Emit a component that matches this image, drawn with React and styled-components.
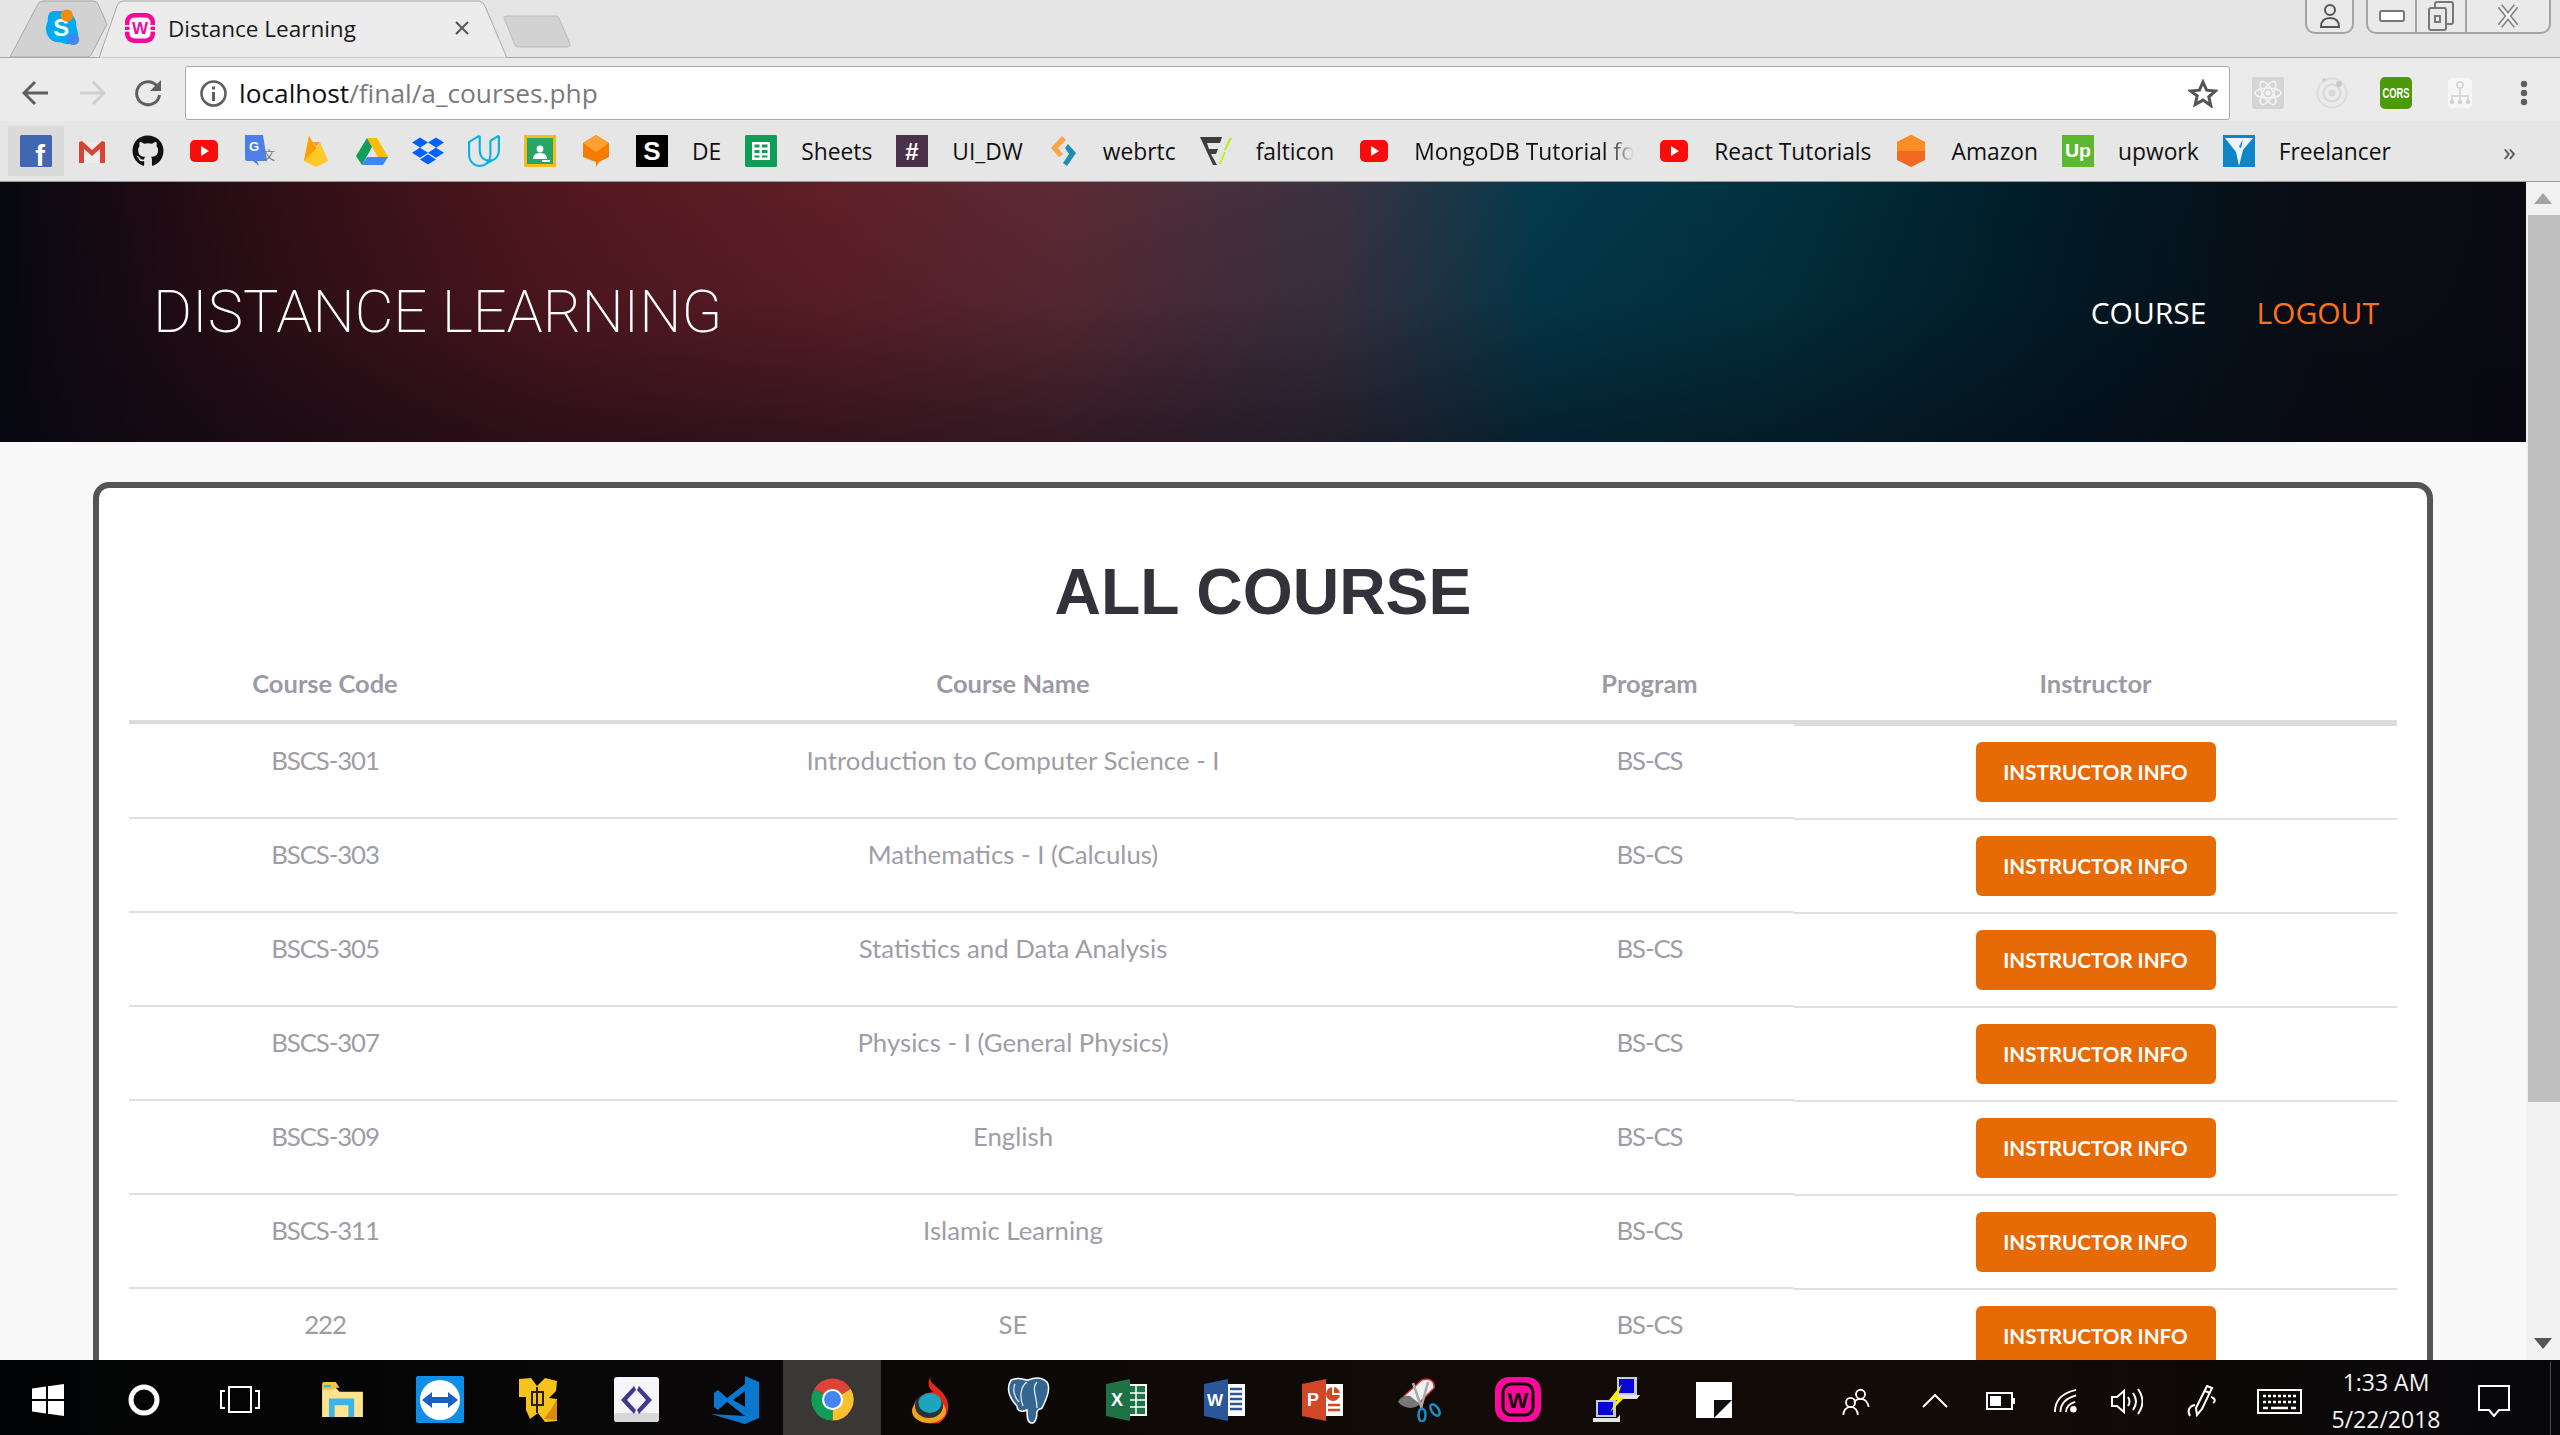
import React from 'react'
import styled, { createGlobalStyle } from 'styled-components'
import { FaGithub, FaDropbox } from 'react-icons/fa'
import { SiUdacity } from 'react-icons/si'

const GlobalStyle = createGlobalStyle`
    html, body {
        margin: 0;
        padding: 0;
        height: 100%;
        overflow: hidden;
    }
    * {
        box-sizing: border-box;
    }
`

const Page = styled.div`
    display: flex;
    flex-direction: column;
    height: 100vh;
    font-family: 'Open Sans', sans-serif;
    background: #f8f8f8;
`

/* browser chrome */
const TabStrip = styled.div`
    display: flex;
    align-items: flex-start;
    flex: none;
    height: 58px;
    padding-left: 10px;
    background: #e5e5e5;
    border-bottom: 1px solid #a8a8a8;
`

const TabShape = styled.svg`
    position: absolute;
    left: 0;
    top: 0;
`

const SideTab = styled.div`
    position: relative;
    flex: none;
    display: flex;
    align-items: center;
    justify-content: center;
    width: 96px;
    height: 58px;
    padding: 0 0 3px 10px;
`

const ActiveTab = styled.div`
    position: relative;
    flex: none;
    display: flex;
    align-items: center;
    width: 408px;
    height: 58px;
    margin-left: -7px;
    padding: 0 0 2px 26px;
`

const TabIcon = styled.span`
    position: relative;
    display: flex;
`

const TabTitle = styled.span`
    position: relative;
    margin-left: 13px;
    font-size: 22.500px;
    color: #1a1a1a;
    width: 287px;
`

const TabClose = styled.svg`
    position: relative;
`

const NewTab = styled.svg`
    flex: none;
    margin: 15px 0 0 -4px;
`

const WindowControls = styled.div`
    display: flex;
    align-items: flex-start;
    margin-left: auto;
    padding-right: 9px;
`

const WindowGroup = styled.div`
    display: flex;
    height: 34px;
    margin-left: ${(p) => p.$gap || 0}px;
    border: 2px solid #a4a4a4;
    border-top: 0;
    border-radius: 0 0 10px 10px;
    background: #e9e9e9;
`

const WindowBtn = styled.div`
    display: flex;
    align-items: center;
    justify-content: center;
    width: ${(p) => p.$w}px;
    border-left: ${(p) => (p.$first ? '0' : '2px solid #a4a4a4')};
`

const Toolbar = styled.div`
    display: flex;
    align-items: flex-start;
    flex: none;
    height: 63px;
    padding: 8px 0 0 8px;
    background: #ebebeb;
`

const NavBtn = styled.div`
    display: flex;
    align-items: center;
    justify-content: center;
    width: 56px;
    height: 53px;
`

const UrlBox = styled.div`
    display: flex;
    align-items: center;
    width: 2045px;
    height: 54px;
    margin-left: 9px;
    padding: 0 11px 0 14px;
    background: #fff;
    border: 1px solid #a8a8a8;
    border-radius: 3px;
`

const UrlText = styled.span`
    margin-left: 12px;
    font-size: 26.300px;
    color: #7b7b7b;
    flex: 1;
    b {
        font-weight: 400;
        color: #111;
    }
`

const Extensions = styled.div`
    display: flex;
    margin-left: 6px;
`

const ExtBtn = styled.div`
    display: flex;
    align-items: center;
    justify-content: center;
    width: 64px;
    height: 53px;
`

const BookmarkBar = styled.div`
    display: flex;
    align-items: center;
    flex: none;
    height: 61px;
    padding: 0 0 1px 8px;
    background: #e6e6e6;
    border-bottom: 1px solid #989898;
`

const Bookmark = styled.div`
    display: flex;
    align-items: center;
    gap: 24px;
    height: 50px;
    padding: 0 12px;
    background: ${(p) => (p.$active ? '#dadada' : 'transparent')};
    svg {
        flex: none;
    }
`

const BookmarkLabel = styled.span`
    padding-top: 2px;
    font-size: 22.800px;
    color: #111;
    white-space: nowrap;
    ${(p) => p.$clip && `
        width: ${p.$clip}px;
        overflow: hidden;
        -webkit-mask-image: linear-gradient(to right, #000 88%, transparent);
        mask-image: linear-gradient(to right, #000 88%, transparent);
    `}
`

const MoreBookmarks = styled.span`
    margin-left: auto;
    padding-right: 44px;
    font-size: 26px;
    line-height: 26px;
    color: #555;
`

/* page */
const Viewport = styled.div`
    display: flex;
    flex: 1;
    min-height: 0;
`

const Main = styled.div`
    flex: 1;
    min-width: 0;
    overflow: hidden;
`

const Header = styled.header`
    display: flex;
    align-items: center;
    justify-content: space-between;
    height: 260px;
    padding: 0 147px 0 153px;
    background:
        linear-gradient(to bottom, rgba(8, 8, 18, 0) 0%, rgba(8, 8, 18, 0.1) 45%, rgba(8, 8, 18, 0.5) 100%),
        linear-gradient(to right, #070811 0%, #260c14 8%, #52171e 22%, #601f27 33%, #5c2a35 42%, #3a3242 53%, #033a4c 61%, #02313f 70%, #011a26 82%, #0a0c14 92%, #0b0a12 100%);
`

const Brand = styled.h1`
    margin: 0;
    font-family: Roboto, sans-serif;
    font-size: 59.600px;
    font-weight: 200;
    color: #fff;
    white-space: nowrap;
`

const Nav = styled.nav`
    display: flex;
    gap: 50px;
`

const NavLink = styled.a`
    font-size: 30px;
    font-weight: 400;
    color: ${(p) => (p.$accent ? '#ff7216' : '#fff')};
`

const Card = styled.section`
    margin: 40px 93px 0;
    padding: 72px 30px 0;
    background: #fff;
    border: 6px solid #555;
    border-radius: 16px;
`

const Title = styled.h2`
    margin: 0;
    font-family: 'Liberation Sans', Arial, sans-serif;
    font-size: 64.300px;
    font-weight: 700;
    line-height: 64px;
    text-align: center;
    color: #33323a;
`

const Row = styled.div`
    display: grid;
    grid-template-columns: 392px 984px 289px 603px;
    font-family: Lato, sans-serif;
`

const HeadCell = styled.div`
    height: ${(p) => (p.$last ? 102 : 100)}px;
    padding-top: 44px;
    font-size: 25.500px;
    font-weight: 700;
    line-height: 30px;
    text-align: center;
    color: #9b9aa5;
    border-bottom: ${(p) => (p.$last ? 6 : 4)}px solid #dcdcdc;
`

const Cell = styled.div`
    height: 94px;
    margin: -1px 0 1px;
    padding-top: 20px;
    font-size: 25.800px;
    line-height: 30px;
    letter-spacing: ${(p) => (p.$tight ? '-1.1px' : '0')};
    text-align: center;
    color: #9e9da7;
    border-bottom: 2px solid #dfdfdf;
`

const ActionCell = styled.div`
    display: flex;
    justify-content: center;
    height: 94px;
    padding-top: 16px;
    border-bottom: 2px solid #dfdfdf;
`

const InfoButton = styled.button`
    width: 240px;
    height: 60px;
    padding: 0 0 1px;
    font-family: Lato, sans-serif;
    font-size: 20.600px;
    font-weight: 700;
    text-transform: uppercase;
    color: #fff;
    background: #e66b07;
    border: 0;
    border-radius: 6px;
`

const Scrollbar = styled.div`
    display: flex;
    flex-direction: column;
    flex: none;
    width: 34px;
    background: #f1f1f1;
`

const ScrollArrow = styled.div`
    display: flex;
    align-items: center;
    justify-content: center;
    flex: none;
    height: 33px;
    margin-top: ${(p) => (p.$bottom ? 'auto' : '0')};
`

const ScrollThumb = styled.div`
    height: 887px;
    margin-left: 2px;
    background: #bfbfbf;
`

/* taskbar */
const Taskbar = styled.footer`
    display: flex;
    flex: none;
    height: 75px;
    background: linear-gradient(to right, #020304 0%, #0a0808 30%, #120b07 58%, #110a07 80%, #07070b 100%);
`

const StartItem = styled.div`
    display: flex;
    align-items: center;
    justify-content: center;
    flex: none;
    width: 96px;
    padding-top: 4px;
`

const AppList = styled.div`
    display: flex;
    margin-left: 5px;
`

const AppItem = styled.div`
    display: flex;
    align-items: center;
    justify-content: center;
    flex: none;
    width: 98px;
    padding-top: 4px;
    background: ${(p) => (p.$active ? '#3b3735' : 'transparent')};
`

const Tray = styled.div`
    display: grid;
    grid-template-columns: 80px 78px 52px 80px 42px 108px 46px 168px 48px 42px;
    align-items: center;
    justify-items: center;
    margin-left: auto;
    padding-top: 4px;
`

const Clock = styled.div`
    font-size: 23px;
    line-height: 37px;
    text-align: center;
    color: #f2f2f2;
    white-space: nowrap;
`

const TrayEnd = styled.div`
    justify-self: end;
    width: 1px;
    height: 75px;
    margin: -4px 9px 0 0;
    background: #4a4a4a;
`

/* icons */
const SkypeIcon = () => (
    <svg width="38" height="38" viewBox="0 0 40 40">
        <path d="M10 2h9c10 0 15 7 15 15 0 4 2 6 2 10 0 7-6 10-11 10-4 0-6-2-10-2C7 35 2 28 2 20c0-4 2-5 2-9 0-5 2-9 6-9z" fill="#00a9f0" />
        <text x="18" y="28" textAnchor="middle" fontFamily="Liberation Sans, sans-serif" fontWeight="700" fontSize="25" fill="#fff">S</text>
        <circle cx="24" cy="7" r="6.500" fill="#f58b0a" />
        <circle cx="31" cy="32" r="6" fill="#4285f4" />
    </svg>
)

const WampIcon = () => (
    <svg width="30" height="30" viewBox="0 0 30 30">
        <rect width="30" height="30" rx="9" fill="#f9069b" />
        <rect x="4.500" y="4.500" width="21" height="21" rx="5" fill="#fff" />
        <rect x="0" y="12" width="5" height="1.600" fill="#fff" />
        <rect x="25" y="12" width="5" height="1.600" fill="#fff" />
        <rect x="0" y="17" width="5" height="1.600" fill="#fff" />
        <rect x="25" y="17" width="5" height="1.600" fill="#fff" />
        <text x="15" y="21" textAnchor="middle" fontFamily="Liberation Sans, sans-serif" fontWeight="700" fontSize="17" fill="#f9069b">W</text>
    </svg>
)

const Facebook = () => (
    <svg width="32" height="32" viewBox="0 0 32 32">
        <rect width="32" height="32" rx="1.500" fill="#4267b2" />
        <text x="20" y="31" textAnchor="middle" fontFamily="Liberation Sans, sans-serif" fontWeight="700" fontSize="29" fill="#fff">f</text>
    </svg>
)

const Gmail = () => (
    <svg width="32" height="32" viewBox="0 0 32 32">
        <path d="M3 7h26v21H3z" fill="#ececec" />
        <path d="M3 7l3-1 10 9 10-9 3 1v21h-5V14l-8 7-8-7v14H3z" fill="#d44638" />
    </svg>
)

const YouTube = () => (
    <svg width="32" height="32" viewBox="0 0 32 32">
        <rect x="2" y="5" width="28" height="22" rx="5" fill="#fa0c0c" />
        <path d="M13 11l8 5-8 5z" fill="#fff" />
    </svg>
)

const Translate = () => (
    <svg width="32" height="32" viewBox="0 0 32 32">
        <path d="M14 6h16v24H14z" fill="#e4e4e4" />
        <path d="M1 0h18l4 26H9l6 5-2-5H3a2 2 0 0 1-2-2z" fill="#4a80e8" />
        <text x="10" y="16" textAnchor="middle" fontFamily="Liberation Sans, sans-serif" fontWeight="700" fontSize="13" fill="#fff">G</text>
        <text x="25" y="25" textAnchor="middle" fontFamily="Noto Sans CJK SC, sans-serif" fontSize="12" fill="#777">文</text>
    </svg>
)

const Firebase = () => (
    <svg width="32" height="32" viewBox="0 0 32 32">
        <path d="M4 26L9 1l7 12 4-6 8 19-12 6z" fill="#ffca28" />
        <path d="M4 26L9 1l7 12z" fill="#ffa000" />
        <path d="M4 26l12-13-3-6 7 0z" fill="#f57c00" opacity="0.7" />
    </svg>
)

const Drive = () => (
    <svg width="32" height="32" viewBox="0 0 32 32">
        <path d="M11 3h10l11 19H22z" fill="#fbbc04" />
        <path d="M11 3l5 9-10 18-6-9z" fill="#0f9d58" />
        <path d="M6 30l5-8h21l-5 8z" fill="#4285f4" />
    </svg>
)

const Classroom = () => (
    <svg width="32" height="32" viewBox="0 0 32 32">
        <rect width="32" height="32" rx="1" fill="#f6bb18" />
        <rect x="3" y="3" width="26" height="26" fill="#25a667" />
        <circle cx="16" cy="14" r="3.400" fill="#fff" />
        <path d="M9 24c0-4 3-6 7-6s7 2 7 6z" fill="#fff" />
        <rect x="18" y="25" width="8" height="2" fill="#fff" />
    </svg>
)

const OrangeBubble = () => (
    <svg width="32" height="32" viewBox="0 0 32 32">
        <path d="M16 0l13 8v14l-10 5-3 5v-5L3 22V8z" fill="#f57c00" />
        <path d="M16 0l13 8-13 9L3 8z" fill="#ffa033" />
    </svg>
)

const SquareS = () => (
    <svg width="32" height="32" viewBox="0 0 32 32">
        <rect width="32" height="32" fill="#000" />
        <text x="16" y="25" textAnchor="middle" fontFamily="Liberation Sans, sans-serif" fontWeight="700" fontSize="26" fill="#fff">S</text>
    </svg>
)

const SheetsIcon = () => (
    <svg width="32" height="32" viewBox="0 0 32 32">
        <rect width="32" height="32" rx="1.500" fill="#0f9d58" />
        <path d="M7 7h18v18H7zM9.500 12.500h5v-3h-5zM17 12.500h5.500v-3H17zM9.500 18h5v-3h-5zM17 18h5.500v-3H17zM9.500 22.500h5V20.500h-5zM17 22.500h5.500V20.500H17z" fill="#fff" fillRule="evenodd" />
    </svg>
)

const Slack = () => (
    <svg width="32" height="32" viewBox="0 0 32 32">
        <rect width="32" height="32" fill="#4a3149" />
        <text x="16" y="25" textAnchor="middle" fontFamily="Liberation Sans, sans-serif" fontWeight="700" fontSize="24" fill="#fff">#</text>
    </svg>
)

const WebRtc = () => (
    <svg width="32" height="32" viewBox="0 0 32 32">
        <path d="M15 1l4 4-8 8 5 6-4 3-8-9z" fill="#f9a44c" />
        <path d="M21 9l8 9-9 13-4-3 6-9-4-6z" fill="#1f8dae" />
    </svg>
)

const Falticon = () => (
    <svg width="32" height="32" viewBox="0 0 32 32">
        <path d="M0 2h22l-2 6H7l2 6h9l-2 5h-5l6 11h-4z" fill="#3d3d3d" />
        <path d="M24 15l5-12 3 0-6 12zM19 29l5-12 2 0-5 12z" fill="#b5f11d" />
    </svg>
)

const Amazon = () => (
    <svg width="32" height="32" viewBox="0 0 32 32">
        <path d="M16 0l14 7v18l-14 7-14-7V7z" fill="#f0691f" />
        <path d="M16 0l14 7v9H2V7z" fill="#fb8d24" />
    </svg>
)

const Upwork = () => (
    <svg width="32" height="32" viewBox="0 0 32 32">
        <rect width="32" height="32" fill="#5cb82e" />
        <text x="16" y="22" textAnchor="middle" fontFamily="Liberation Sans, sans-serif" fontWeight="700" fontSize="18" textLength="26" lengthAdjust="spacingAndGlyphs" fill="#fff">Up</text>
    </svg>
)

const Freelancer = () => (
    <svg width="32" height="32" viewBox="0 0 32 32">
        <rect width="32" height="32" fill="#0d85c6" />
        <path d="M2 3h28L20 15l-4 16-3-14z" fill="#e9f5fb" />
        <path d="M20 4l-4 8 2 1z" fill="#0d85c6" />
    </svg>
)

const bookmarks = [
    { icon: <Facebook />, active: true },
    { icon: <Gmail /> },
    { icon: <FaGithub size={32} color="#111" /> },
    { icon: <YouTube /> },
    { icon: <Translate /> },
    { icon: <Firebase /> },
    { icon: <Drive /> },
    { icon: <FaDropbox size={32} color="#0061fe" /> },
    { icon: <SiUdacity size={32} color="#02b3e4" /> },
    { icon: <Classroom /> },
    { icon: <OrangeBubble /> },
    { icon: <SquareS /> },
    { label: 'DE' },
    { icon: <SheetsIcon />, label: 'Sheets' },
    { icon: <Slack />, label: 'UI_DW' },
    { icon: <WebRtc />, label: 'webrtc' },
    { icon: <Falticon />, label: 'falticon' },
    { icon: <YouTube />, label: 'MongoDB Tutorial for Beginners', clip: 220 },
    { icon: <YouTube />, label: 'React Tutorials' },
    { icon: <Amazon />, label: 'Amazon' },
    { icon: <Upwork />, label: 'upwork' },
    { icon: <Freelancer />, label: 'Freelancer' },
]

const courses = [
    ['BSCS-301', 'Introduction to Computer Science - I'],
    ['BSCS-303', 'Mathematics - I (Calculus)'],
    ['BSCS-305', 'Statistics and Data Analysis'],
    ['BSCS-307', 'Physics - I (General Physics)'],
    ['BSCS-309', 'English'],
    ['BSCS-311', 'Islamic Learning'],
    ['222', 'SE'],
]

const taskApps = [
    <svg key="files" width="43" height="35" viewBox="0 0 44 36">
        <path d="M1 6h14l4 4h24v26H1z" fill="#ffe38e" />
        <path d="M1 2q0-2 2-2h12l4 6h-4l-2 2H1z" fill="#f6c344" />
        <rect x="3" y="3" width="7" height="2.500" fill="#3cb4e8" />
        <path d="M8 17h26v19h-6v-12H14v12H8z" fill="#3cb4e8" />
    </svg>,
    <svg key="tv" width="48" height="47" viewBox="0 0 48 47">
        <rect width="48" height="47" rx="2" fill="#0e8ee9" />
        <ellipse cx="24" cy="24" rx="20" ry="20" fill="#fff" />
        <path d="M6 24l10-8v5h16v-5l10 8-10 8v-5H16v5z" fill="#1b5fc2" />
    </svg>,
    <svg key="vm" width="42" height="45" viewBox="0 0 42 45">
        <path d="M2 2l12-1 6 8 8-8 12 3-1 10-7 7 8 1v22l-12 1-7-9-8 6-4-9v-13H2z" fill="#f6c21c" />
        <path d="M15 15h11v13H15z" fill="none" stroke="#2b1d05" strokeWidth="2" />
        <path d="M20 10v26" stroke="#2b1d05" strokeWidth="2" />
        <path d="M27 42l13 1V22l-5 9z" fill="#d98a10" />
    </svg>,
    <svg key="code" width="45" height="45" viewBox="0 0 45 45">
        <rect width="45" height="45" rx="3" fill="#f6f6fa" />
        <rect y="36" width="45" height="9" rx="3" fill="#d7d7d7" />
        <path d="M20 9L7 23l13 14 2-4-9-10 9-10zM25 9l13 14-13 14-2-4 9-10-9-10z" fill="#3f3a8f" />
    </svg>,
    <svg key="vs" width="49" height="48" viewBox="0 0 49 48">
        <path d="M35 0l14 6v36l-14 6L1 38l34 2z" fill="#0a78cf" />
        <path d="M35 8L17 22 8 14l-4 3v14l4 3 9-8 18 14v-9L23 24l12-9z" fill="#0a78cf" />
    </svg>,
    <svg key="chrome" width="45" height="45" viewBox="0 0 32 32">
        <path d="M16 16L3 8.500A15 15 0 0 1 29 8.500z" fill="#db4437" />
        <path d="M16 16L29 8.500A15 15 0 0 1 16 31z" fill="#fbc02d" />
        <path d="M16 16L16 31A15 15 0 0 1 3 8.500z" fill="#0f9d58" />
        <circle cx="16" cy="16" r="7.500" fill="#fff" />
        <circle cx="16" cy="16" r="6" fill="#4285f4" />
    </svg>,
    <svg key="fire" width="38" height="48" viewBox="0 0 38 48">
        <path d="M20 0c-3 6 4 9 10 15 10 10 10 24-2 32-11 2-25-1-26-12C1 25 10 17 22 16 17 12 16 6 20 0z" fill="#e22a1c" />
        <ellipse cx="18" cy="35" rx="17" ry="12" fill="#f2a31a" />
        <ellipse cx="18" cy="30" rx="14" ry="12" fill="#27323c" />
        <ellipse cx="19" cy="27" rx="11.500" ry="10" fill="#1ba6bd" />
    </svg>,
    <svg key="pg" width="46" height="48" viewBox="0 0 46 48">
        <path d="M6 4C14 0 18 4 23 4c5-2 13-4 19 2 4 6 0 16-4 24-2 6-4 0-6 6 0 6-2 12-6 11-4-1-4-7-4-13-4 2-10 2-10-4C6 24 0 14 6 4z" fill="#336791" stroke="#fff" strokeWidth="1.500" />
        <path d="M22 6c-6 4-8 14-4 24M32 6c-6 6 0 14 0 26M10 8c-3 6 0 14 4 18" fill="none" stroke="#dfe9f2" strokeWidth="1.300" />
    </svg>,
    <svg key="xl" width="41" height="42" viewBox="0 0 41 42">
        <path d="M20 5h21v32H20z" fill="#fff" />
        <path d="M22 7h17v28H22z" fill="#1f7246" />
        <path d="M22 14h17M22 21h17M22 28h17M30 7v28" stroke="#fff" strokeWidth="1.500" />
        <path d="M0 5l24-5v42L0 37z" fill="#1f7246" />
        <text x="11" y="27" textAnchor="middle" fontFamily="Liberation Sans, sans-serif" fontWeight="700" fontSize="18" fill="#fff">X</text>
    </svg>,
    <svg key="wd" width="41" height="42" viewBox="0 0 41 42">
        <path d="M20 5h21v32H20z" fill="#fff" />
        <path d="M26 10h12M26 15h12M26 20h12M26 25h12M26 30h12" stroke="#2b579a" strokeWidth="2.500" />
        <path d="M0 5l24-5v42L0 37z" fill="#2b579a" />
        <text x="11" y="27" textAnchor="middle" fontFamily="Liberation Sans, sans-serif" fontWeight="700" fontSize="17" fill="#fff">W</text>
    </svg>,
    <svg key="pp" width="41" height="42" viewBox="0 0 41 42">
        <path d="M20 5h21v32H20z" fill="#fff" />
        <circle cx="31" cy="15" r="7" fill="#d24726" />
        <path d="M31 8v7h7" fill="none" stroke="#fff" strokeWidth="2" />
        <path d="M26 26h12M26 31h12" stroke="#d24726" strokeWidth="2.500" />
        <path d="M0 5l24-5v42L0 37z" fill="#d24726" />
        <text x="11" y="27" textAnchor="middle" fontFamily="Liberation Sans, sans-serif" fontWeight="700" fontSize="18" fill="#fff">P</text>
    </svg>,
    <svg key="snip" width="44" height="44" viewBox="0 0 44 44">
        <path d="M6 18L24 2c8-2 13 1 12 8L20 26C13 28 8 26 6 18z" fill="#eef0f4" stroke="#d13a3a" strokeWidth="1.500" />
        <path d="M0 24c3-6 8-7 12-6l10 8c-4 5-15 6-22-2z" fill="#777" />
        <path d="M15 5l9 26M30 4L23 30" stroke="#aaa" strokeWidth="2.500" />
        <ellipse cx="24" cy="37" rx="3.500" ry="6.500" fill="none" stroke="#1a8ccc" strokeWidth="2.500" />
        <ellipse cx="37" cy="32" rx="3.500" ry="6.500" fill="none" stroke="#1a8ccc" strokeWidth="2.500" transform="rotate(-35 37 32)" />
    </svg>,
    <svg key="wamp" width="46" height="45" viewBox="0 0 46 45">
        <rect width="46" height="45" rx="14" fill="#fb0a9b" />
        <rect x="8" y="7" width="30" height="31" rx="8" fill="none" stroke="#120a07" strokeWidth="3" />
        <text x="23" y="31" textAnchor="middle" fontFamily="Liberation Sans, sans-serif" fontWeight="700" fontSize="22" fill="#120a07">W</text>
    </svg>,
    <svg key="putty" width="47" height="47" viewBox="0 0 47 47">
        <rect x="24" y="1" width="20" height="18" fill="#c8ccd2" />
        <rect x="26" y="3" width="15" height="14" fill="#0606d8" />
        <path d="M24 19h23l-3 4H24z" fill="#e6e6e6" />
        <rect x="3" y="24" width="20" height="17" fill="#c8ccd2" />
        <rect x="5" y="26" width="15" height="13" fill="#0606d8" />
        <path d="M0 42h24l3-3v7H0z" fill="#e6e6e6" />
        <path d="M29 8L16 24h8l-7 12 15-15h-8l5-13z" fill="#ffef00" />
    </svg>,
    <svg key="sticky" width="36" height="36" viewBox="0 0 36 36">
        <rect width="36" height="36" fill="#fff" />
        <path d="M18 18h18L18 36z" fill="#111" />
    </svg>,
]

const App = () => {
    return (
        <Page>
            <GlobalStyle />
            <TabStrip>
                <SideTab>
                    <TabShape width="100" height="58" viewBox="0 0 100 58">
                        <path d="M0 57L28 4q2-3 5-3h50q4 0 5 3l9 20-16 31q-1 2-4 2z" fill="#d2d2d2" stroke="#a8a8a8" />
                    </TabShape>
                    <TabIcon><SkypeIcon /></TabIcon>
                </SideTab>
                <ActiveTab>
                    <TabShape width="408" height="58" viewBox="0 0 408 58">
                        <path d="M0 58L18 6q2-5 6-5h356q4 0 6 5l22 52z" fill="#ececec" stroke="#a8a8a8" />
                    </TabShape>
                    <TabIcon><WampIcon /></TabIcon>
                    <TabTitle>Distance Learning</TabTitle>
                    <TabClose width="14" height="14" viewBox="0 0 14 14">
                        <path d="M1 1l12 12M13 1L1 13" stroke="#555" strokeWidth="2" />
                    </TabClose>
                </ActiveTab>
                <NewTab width="68" height="34" viewBox="0 0 68 34">
                    <path d="M1 3q0-2 2-2h50q2 0 3 2l11 26q0 3-2 3H15q-3 0-3-2z" fill="#d2d2d2" stroke="#bcbcbc" />
                </NewTab>
                <WindowControls>
                    <WindowGroup>
                        <WindowBtn $first $w={45}>
                            <svg width="22" height="26" viewBox="0 0 22 26">
                                <circle cx="11" cy="7" r="5" fill="none" stroke="#555" strokeWidth="2" />
                                <path d="M2 24c0-6 3-9 9-9s9 3 9 9z" fill="none" stroke="#555" strokeWidth="2" />
                            </svg>
                        </WindowBtn>
                    </WindowGroup>
                    <WindowGroup $gap={12}>
                        <WindowBtn $first $w={47}>
                            <svg width="26" height="12" viewBox="0 0 26 12">
                                <rect x="1" y="1" width="24" height="10" rx="2" fill="#fff" stroke="#777" strokeWidth="2" />
                            </svg>
                        </WindowBtn>
                        <WindowBtn $w={50}>
                            <svg width="26" height="30" viewBox="0 0 26 30">
                                <rect x="7" y="1" width="18" height="22" rx="2" fill="none" stroke="#777" strokeWidth="2" />
                                <rect x="1" y="7" width="17" height="22" rx="2" fill="#e9e9e9" stroke="#777" strokeWidth="2" />
                                <rect x="7" y="15" width="5" height="6" fill="none" stroke="#777" strokeWidth="2" />
                            </svg>
                        </WindowBtn>
                        <WindowBtn $w={84}>
                            <svg width="24" height="26" viewBox="0 0 24 26">
                                <path d="M4 3l16 20M20 3L4 23" stroke="#888" strokeWidth="6" fill="none" />
                                <path d="M4 3l16 20M20 3L4 23" stroke="#f6f6f6" strokeWidth="2.500" fill="none" />
                            </svg>
                        </WindowBtn>
                    </WindowGroup>
                </WindowControls>
            </TabStrip>
            <Toolbar>
                <NavBtn>
                    <svg width="28" height="26" viewBox="0 0 28 26">
                        <path d="M26 13H3M13 2L2 13l11 11" fill="none" stroke="#5f5f5f" strokeWidth="3" />
                    </svg>
                </NavBtn>
                <NavBtn>
                    <svg width="28" height="26" viewBox="0 0 28 26">
                        <path d="M2 13h23M15 2l11 11-11 11" fill="none" stroke="#cfcfcf" strokeWidth="3" />
                    </svg>
                </NavBtn>
                <NavBtn>
                    <svg width="28" height="28" viewBox="0 0 28 28">
                        <path d="M23 7a11.500 11.500 0 1 0 2.500 9" fill="none" stroke="#5f5f5f" strokeWidth="3" />
                        <path d="M27 1v11H16z" fill="#5f5f5f" />
                    </svg>
                </NavBtn>
                <UrlBox>
                    <svg width="27" height="27" viewBox="0 0 27 27">
                        <circle cx="13.500" cy="13.500" r="12" fill="none" stroke="#5f5f5f" strokeWidth="2.600" />
                        <rect x="12" y="12" width="3" height="9" fill="#5f5f5f" />
                        <rect x="12" y="6.500" width="3" height="3" fill="#5f5f5f" />
                    </svg>
                    <UrlText><b>localhost</b>/final/a_courses.php</UrlText>
                    <svg width="30" height="29" viewBox="0 0 30 29">
                        <path d="M15 3l3.600 8.200 8.900.8-6.700 5.900 2 8.700L15 21.100l-7.800 4.500 2-8.700L2.500 12l8.900-.8z" fill="none" stroke="#555" strokeWidth="3" />
                    </svg>
                </UrlBox>
                <Extensions>
                    <ExtBtn>
                        <svg width="32" height="32" viewBox="0 0 32 32">
                            <rect width="32" height="32" rx="2" fill="#d5d5d5" />
                            <g fill="none" stroke="#f4f4f4" strokeWidth="1.500">
                                <ellipse cx="16" cy="16" rx="13" ry="5" />
                                <ellipse cx="16" cy="16" rx="13" ry="5" transform="rotate(60 16 16)" />
                                <ellipse cx="16" cy="16" rx="13" ry="5" transform="rotate(120 16 16)" />
                            </g>
                            <circle cx="16" cy="16" r="2.500" fill="#f4f4f4" />
                        </svg>
                    </ExtBtn>
                    <ExtBtn>
                        <svg width="32" height="32" viewBox="0 0 32 32">
                            <circle cx="16" cy="16" r="14.500" fill="none" stroke="#dcdcdc" strokeWidth="2" />
                            <circle cx="16" cy="16" r="8.500" fill="none" stroke="#d8d8d8" strokeWidth="2" />
                            <circle cx="16" cy="16" r="3.500" fill="#d8d8d8" />
                            <circle cx="23" cy="7" r="3" fill="#c8c8c8" />
                            <circle cx="8" cy="3" r="2" fill="#d0d0d0" />
                        </svg>
                    </ExtBtn>
                    <ExtBtn>
                        <svg width="32" height="32" viewBox="0 0 32 32">
                            <rect width="32" height="32" rx="5" fill="#4c9a09" />
                            <text x="16" y="21" textAnchor="middle" fontFamily="Liberation Sans, sans-serif" fontWeight="700" fontSize="14" textLength="27" lengthAdjust="spacingAndGlyphs" fill="#fff">CORS</text>
                        </svg>
                    </ExtBtn>
                    <ExtBtn>
                        <svg width="24" height="30" viewBox="0 0 24 30">
                            <rect width="24" height="30" rx="4" fill="#f6f6f6" />
                            <circle cx="12" cy="7" r="3" fill="none" stroke="#d2d2d2" strokeWidth="1.500" />
                            <path d="M12 10v5M4 22v-4h16v4M12 15v7" fill="none" stroke="#d2d2d2" strokeWidth="1.500" />
                            <circle cx="4" cy="24" r="2.200" fill="#d2d2d2" />
                            <circle cx="12" cy="24" r="2.200" fill="#d2d2d2" />
                            <circle cx="20" cy="24" r="2.200" fill="#d2d2d2" />
                        </svg>
                    </ExtBtn>
                    <ExtBtn>
                        <svg width="8" height="26" viewBox="0 0 8 26">
                            <circle cx="4" cy="4" r="3.200" fill="#5f5f5f" />
                            <circle cx="4" cy="13" r="3.200" fill="#5f5f5f" />
                            <circle cx="4" cy="22" r="3.200" fill="#5f5f5f" />
                        </svg>
                    </ExtBtn>
                </Extensions>
            </Toolbar>
            <BookmarkBar>
                {bookmarks.map((b, i) => (
                    <Bookmark key={i} $active={b.active}>
                        {b.icon}
                        {b.label && <BookmarkLabel $clip={b.clip}>{b.label}</BookmarkLabel>}
                    </Bookmark>
                ))}
                <MoreBookmarks>»</MoreBookmarks>
            </BookmarkBar>
            <Viewport>
                <Main>
                    <Header>
                        <Brand>DISTANCE LEARNING</Brand>
                        <Nav>
                            <NavLink>COURSE</NavLink>
                            <NavLink $accent>LOGOUT</NavLink>
                        </Nav>
                    </Header>
                    <Card>
                        <Title>ALL COURSE</Title>
                        <Row>
                            <HeadCell>Course Code</HeadCell>
                            <HeadCell>Course Name</HeadCell>
                            <HeadCell>Program</HeadCell>
                            <HeadCell $last>Instructor</HeadCell>
                        </Row>
                        {courses.map(([code, name]) => (
                            <Row key={code}>
                                <Cell $tight>{code}</Cell>
                                <Cell>{name}</Cell>
                                <Cell $tight>BS-CS</Cell>
                                <ActionCell>
                                    <InfoButton>Instructor Info</InfoButton>
                                </ActionCell>
                            </Row>
                        ))}
                    </Card>
                </Main>
                <Scrollbar>
                    <ScrollArrow>
                        <svg width="18" height="11" viewBox="0 0 18 11"><path d="M9 0l9 11H0z" fill="#a3a3a3" /></svg>
                    </ScrollArrow>
                    <ScrollThumb />
                    <ScrollArrow $bottom>
                        <svg width="18" height="11" viewBox="0 0 18 11"><path d="M0 0h18L9 11z" fill="#555" /></svg>
                    </ScrollArrow>
                </Scrollbar>
            </Viewport>
            <Taskbar>
                <StartItem>
                    <svg width="32" height="32" viewBox="0 0 32 32">
                        <path d="M0 4.500l14-2V15H0zM16 2.200L32 0v15H16zM0 17h14v12.500l-14-2zM16 17h16v15l-16-2.200z" fill="#fff" />
                    </svg>
                </StartItem>
                <StartItem>
                    <svg width="32" height="32" viewBox="0 0 32 32">
                        <circle cx="16" cy="16" r="13" fill="none" stroke="#fff" strokeWidth="5" />
                    </svg>
                </StartItem>
                <StartItem>
                    <svg width="40" height="27" viewBox="0 0 40 27">
                        <rect x="9" y="1" width="22" height="25" fill="none" stroke="#fff" strokeWidth="2" />
                        <path d="M5 5H1v17h4M35 5h4v17h-4" fill="none" stroke="#fff" strokeWidth="2" />
                    </svg>
                </StartItem>
                <AppList>
                    {taskApps.map((icon, i) => (
                        <AppItem key={i} $active={i === 5}>{icon}</AppItem>
                    ))}
                </AppList>
                <Tray>
                    <svg width="28" height="29" viewBox="0 0 30 32">
                        <g fill="none" stroke="#fff" strokeWidth="2">
                            <circle cx="20" cy="8" r="5" />
                            <path d="M13 17c1-2 4-4 7-4 5 0 8 4 9 9" />
                            <circle cx="9" cy="17" r="5" />
                            <path d="M1 31c0-5 3-9 8-9s8 4 8 9" />
                        </g>
                    </svg>
                    <svg width="26" height="14" viewBox="0 0 26 14"><path d="M1 13L13 1l12 12" fill="none" stroke="#fff" strokeWidth="2" /></svg>
                    <svg width="29" height="18" viewBox="0 0 29 18">
                        <rect x="1" y="1" width="25" height="16" fill="none" stroke="#fff" strokeWidth="2" />
                        <rect x="4" y="4" width="11" height="10" fill="#fff" />
                        <rect x="27" y="6" width="2" height="6" fill="#fff" />
                    </svg>
                    <svg width="24" height="24" viewBox="0 0 26 26">
                        <g fill="none" stroke="#fff" strokeWidth="2">
                            <path d="M1 25C1 12 10 4 24 1" />
                            <path d="M7 25c0-9 6-15 17-18" />
                            <path d="M13 25c0-5 3-9 10-11" />
                        </g>
                        <circle cx="21" cy="22" r="3.500" fill="#fff" />
                    </svg>
                    <svg width="32" height="27" viewBox="0 0 32 27">
                        <path d="M1 9h5l7-6v21l-7-6H1z" fill="none" stroke="#fff" strokeWidth="2" />
                        <path d="M17 9q3 4.500 0 9M22 5q6 8.500 0 17M27 1q9 12.500 0 25" fill="none" stroke="#fff" strokeWidth="2" />
                    </svg>
                    <svg width="32" height="32" viewBox="0 0 32 32">
                        <g fill="none" stroke="#fff" strokeWidth="2">
                            <path d="M21 1l5 2-10 21-5 6-1-7z" />
                            <path d="M19 6l5 2" />
                            <path d="M25 12c4 1 5 4 2 6M9 20c-6 1-8 6-5 11" />
                        </g>
                    </svg>
                    <svg width="45" height="25" viewBox="0 0 45 25">
                        <rect x="1" y="1" width="43" height="23" fill="none" stroke="#fff" strokeWidth="2" />
                        <path d="M6 7h33M6 13h33" stroke="#fff" strokeWidth="2.500" strokeDasharray="3 2" fill="none" />
                        <path d="M6 19h5M14 19h17M34 19h5" stroke="#fff" strokeWidth="2.500" fill="none" />
                    </svg>
                    <Clock>1:33 AM<br />5/22/2018</Clock>
                    <svg width="32" height="32" viewBox="0 0 32 32">
                        <path d="M1 1h30v24H21l-5 6-5-6H1z" fill="none" stroke="#fff" strokeWidth="2" />
                    </svg>
                    <TrayEnd />
                </Tray>
            </Taskbar>
        </Page>
    )
}

export default App
